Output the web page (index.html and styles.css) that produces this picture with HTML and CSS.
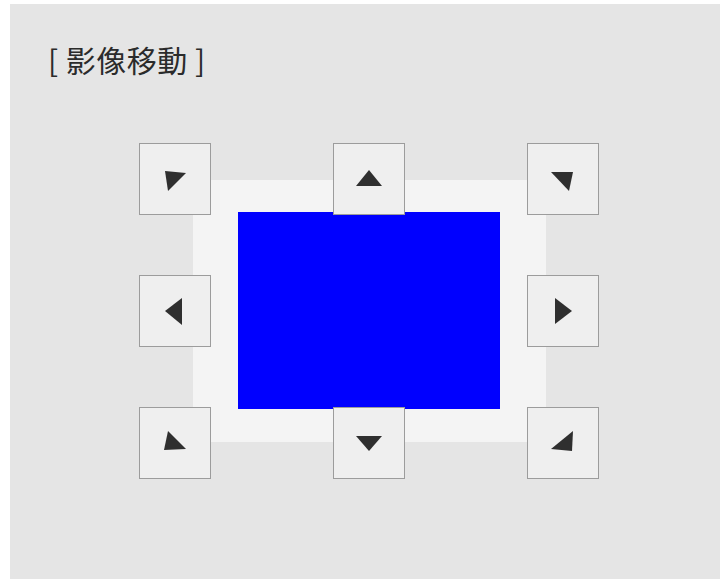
FILE: index.html
```html
<!DOCTYPE html>
<html lang="zh-Hant">
<head>
<meta charset="utf-8">
<title>影像移動</title>
<link rel="stylesheet" href="styles.css">
</head>
<body>
<div class="screen">
  <h1 class="title">[ 影像移動 ]</h1>
  <div class="stage">
    <div class="panel"><div class="image"></div></div>
    <div class="btn"><svg viewBox="0 0 72 72"><polygon points="26,28 47,30 29,48"/></svg></div>
    <div class="btn"><svg viewBox="0 0 72 72"><polygon points="23,43 49,43 36,27"/></svg></div>
    <div class="btn"><svg viewBox="0 0 72 72"><polygon points="24,29 46,29 42,48"/></svg></div>
    <div class="btn"><svg viewBox="0 0 72 72"><polygon points="26,36 43,23 43,50"/></svg></div>
    <div class="btn btn-empty"></div>
    <div class="btn"><svg viewBox="0 0 72 72"><polygon points="28,23 28,49 45,36"/></svg></div>
    <div class="btn"><svg viewBox="0 0 72 72"><polygon points="29,24 47,42 25,43"/></svg></div>
    <div class="btn"><svg viewBox="0 0 72 72"><polygon points="23,29 49,29 36,44"/></svg></div>
    <div class="btn"><svg viewBox="0 0 72 72"><polygon points="46,24 45,44 24,42"/></svg></div>
  </div>
</div>
</body>
</html>
```
FILE: styles.css
```css
html, body {
  margin: 0;
  padding: 0;
  background: #ffffff;
}
.screen {
  margin: 4px 0 0 10px;
  width: 710px;
  height: 575px;
  background: #e5e5e5;
  overflow: hidden;
  font-family: "Noto Sans CJK TC", "Noto Sans", sans-serif;
}
.title {
  margin: 0;
  padding: 37px 0 0 38px;
  font-size: 30px;
  line-height: 36px;
  font-weight: 400;
  letter-spacing: 0.5px;
  color: #2b2b2b;
}
.stage {
  position: relative;
  margin: 66px 0 0 129px;
  width: 460px;
  height: 336px;
  display: grid;
  grid-template-columns: 72px 72px 72px;
  grid-template-rows: 72px 72px 72px;
  justify-content: space-between;
  align-content: space-between;
}
.panel {
  position: absolute;
  left: 54px;
  top: 37px;
  width: 353px;
  height: 262px;
  box-sizing: border-box;
  padding: 32px 46px 33px 45px;
  background: #f4f4f4;
}
.image {
  width: 100%;
  height: 100%;
  background: #0000ff;
}
.btn {
  position: relative;
  box-sizing: border-box;
  width: 72px;
  height: 72px;
  background: #efefef;
  border: 1.5px solid #9c9c9c;
}
.btn svg {
  display: block;
  width: 72px;
  height: 72px;
  margin: -1.5px;
  fill: #2f2f2f;
}
.btn-empty {
  visibility: hidden;
}
```
